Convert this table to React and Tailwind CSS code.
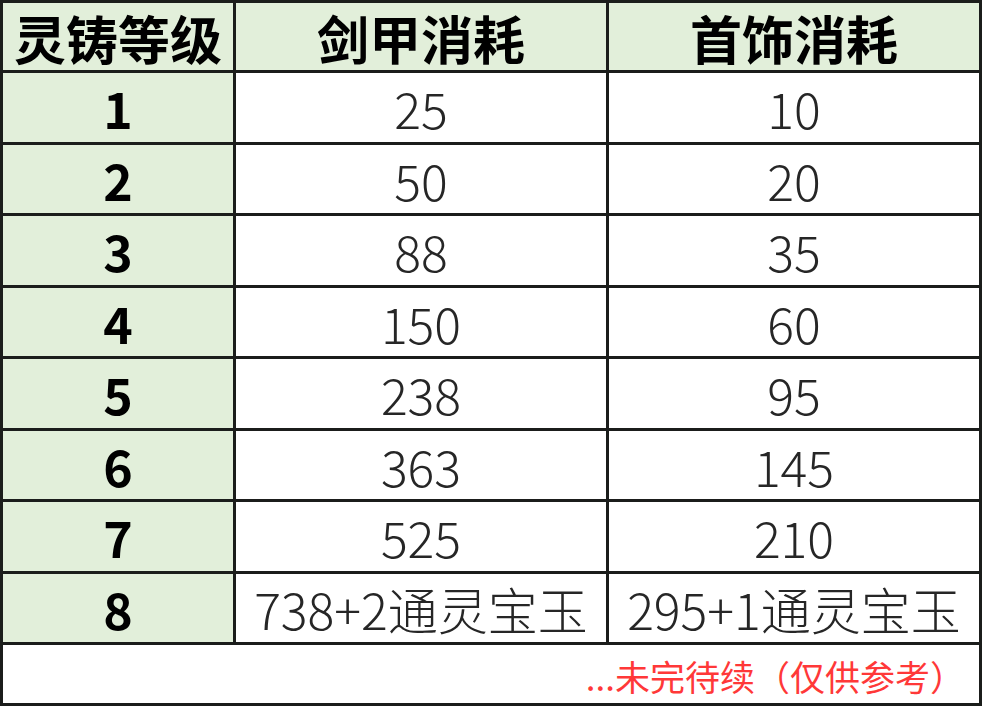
const rows = [
  ['1', '25', '10'],
  ['2', '50', '20'],
  ['3', '88', '35'],
  ['4', '150', '60'],
  ['5', '238', '95'],
  ['6', '363', '145'],
  ['7', '525', '210'],
  ['8', '738+2通灵宝玉', '295+1通灵宝玉'],
]

const font = { fontFamily: '"Noto Sans CJK SC", "Noto Sans", sans-serif' }

export default function App() {
  return (
    <div className="w-[984px] h-[708px] bg-white" style={font}>
      <div className="w-[982px] grid grid-cols-[230px_370px_370px] grid-rows-[67px_repeat(8,68.5px)_58px] gap-[3px] p-[3px] bg-[#1b1d1b]">
        <div className="bg-[#e2efda] flex items-center justify-center pt-[2px] text-[52px] font-bold text-black leading-none">灵铸等级</div>
        <div className="bg-[#e2efda] flex items-center justify-center pt-[2px] text-[52px] font-bold text-black leading-none">剑甲消耗</div>
        <div className="bg-[#e2efda] flex items-center justify-center pt-[2px] text-[52px] font-bold text-black leading-none">首饰消耗</div>
        {rows.map((r) => (
          <div key={r[0]} className="contents">
            <div className="bg-[#e2efda] flex items-center justify-center text-[50px] font-semibold text-black leading-none">{r[0]}</div>
            <div className="bg-white flex items-center justify-center text-[50px] font-light text-[#262626] leading-none whitespace-nowrap">{r[1]}</div>
            <div className="bg-white flex items-center justify-center text-[50px] font-light text-[#262626] leading-none whitespace-nowrap">{r[2]}</div>
          </div>
        ))}
        <div className="col-span-3 bg-white flex items-center justify-end pr-[14px] pt-[2px] text-[35px] text-[#ff3838] leading-none whitespace-nowrap">...未完待续（仅供参考）</div>
      </div>
    </div>
  )
}
